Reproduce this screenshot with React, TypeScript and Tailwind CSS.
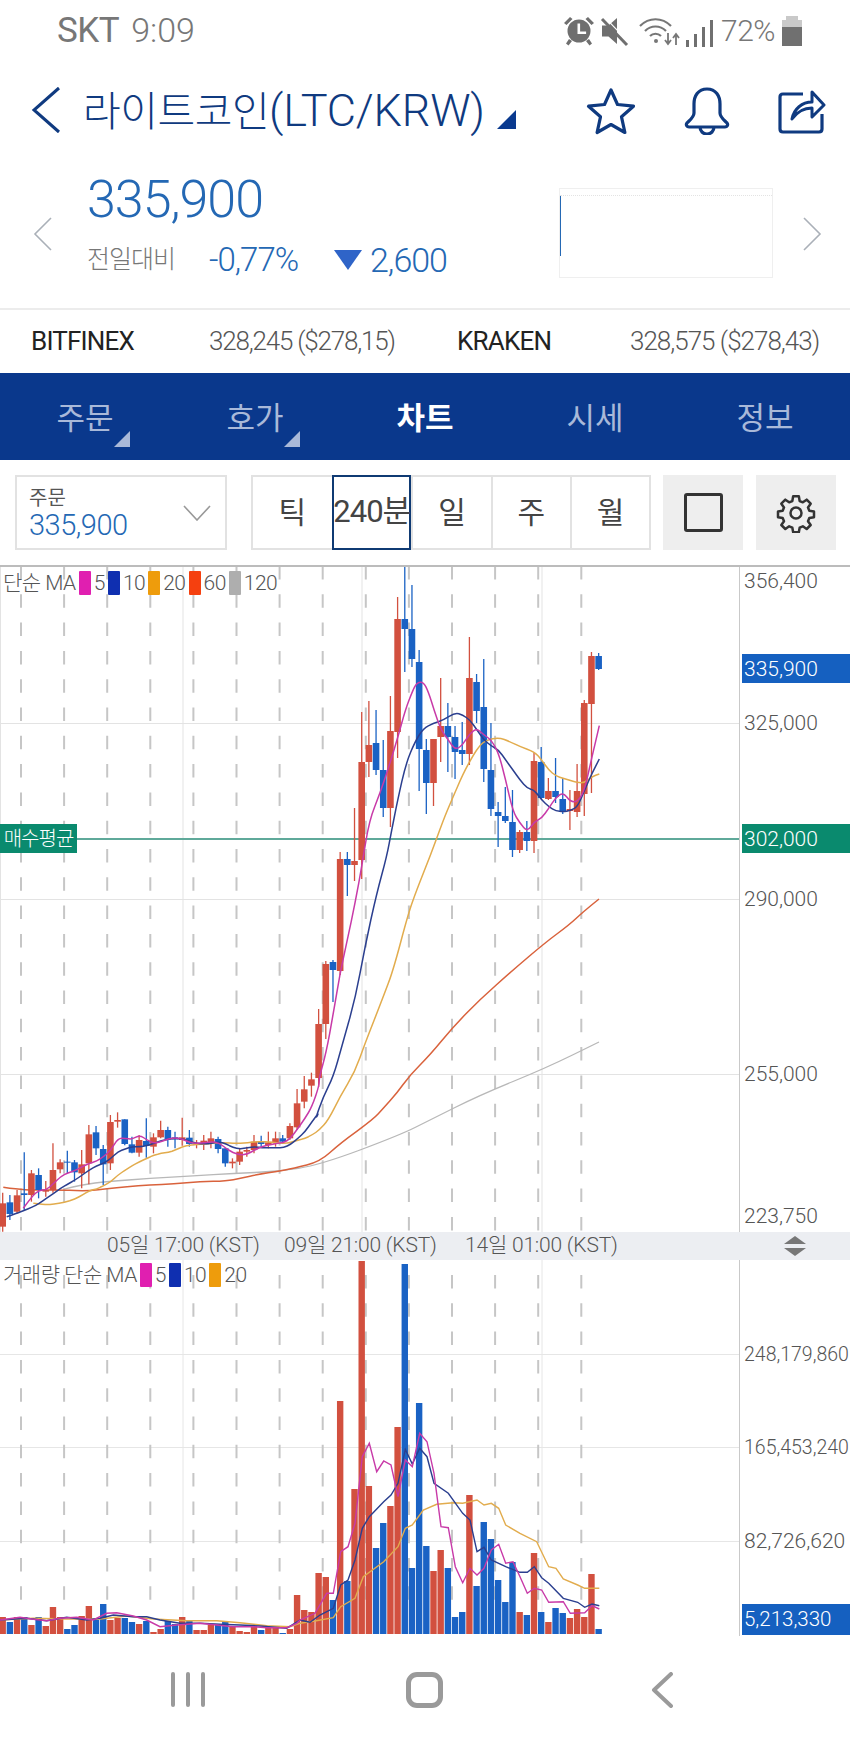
/**
 * Coin detail screen: price header, tabs, candle chart and volume chart
 */

import React from 'react';

const RED = '#d2503f';
const BLUE = '#1a62c4';
const NAVY = '#0f3a80';

const slotX = (i: number) => 2.7 + 7.18 * i;

// read off the 3x crops, so each list carries the origin of its crop
const at = (ox: number, oy: number, pts: number[][]) => pts.map(([x, y]) => [ox + x / 3, oy + y / 3]);
const toPath = (pts: number[][]) => pts.map(([x, y], i) => `${i ? 'L' : 'M'}${x.toFixed(1)} ${y.toFixed(1)}`).join('');

// rounds the corners through the midpoints, for the moving averages of the price panel
const toSmooth = (pts: number[][]) => {
  let d = `M${pts[0][0].toFixed(1)} ${pts[0][1].toFixed(1)}`;
  for (let i = 1; i < pts.length - 1; i++) {
    const mx = (pts[i][0] + pts[i + 1][0]) / 2;
    const my = (pts[i][1] + pts[i + 1][1]) / 2;
    d += `Q${pts[i][0].toFixed(1)} ${pts[i][1].toFixed(1)} ${mx.toFixed(1)} ${my.toFixed(1)}`;
  }
  const last = pts[pts.length - 1];
  return `${d}L${last[0].toFixed(1)} ${last[1].toFixed(1)}`;
};

// wick top, body top, body bottom, wick bottom, 1 = rising (red)
type Candle = [number, number, number, number, number];

const leftCandles: Candle[] = [
  [578, 610, 680, 695, 1], [585, 607, 642, 660, 0], [570, 586, 635, 640, 1], [457, 580, 585, 630, 0],
  [510, 520, 585, 605, 1], [505, 525, 570, 595, 0], [543, 570, 575, 590, 1], [430, 510, 570, 578, 1],
  [478, 487, 508, 520, 1], [452, 485, 488, 520, 0], [480, 487, 517, 545, 0], [450, 493, 520, 565, 1],
  [375, 403, 490, 553, 1], [378, 397, 445, 465, 0], [435, 447, 493, 555, 0], [345, 366, 490, 510, 1],
  [337, 360, 365, 383, 1], [358, 358, 432, 436, 0], [410, 433, 458, 460, 0], [405, 420, 458, 470, 1],
  [355, 423, 438, 473, 0], [400, 412, 440, 460, 1], [362, 390, 412, 415, 1], [380, 390, 418, 440, 0],
  [395, 412, 418, 445, 0], [353, 412, 420, 437, 1], [390, 413, 432, 440, 0], [420, 430, 433, 445, 1],
  [405, 422, 433, 450, 1], [395, 415, 428, 445, 1], [410, 417, 447, 460, 0], [445, 445, 490, 500, 0],
  [475, 485, 490, 505, 1], [445, 455, 485, 495, 1], [440, 450, 455, 470, 1], [405, 425, 450, 460, 1],
  [407, 425, 432, 440, 0], [395, 427, 435, 445, 1], [395, 415, 430, 440, 1], [405, 415, 425, 432, 0],
  [370, 378, 415, 420, 1], [267, 310, 382, 390, 1], [228, 268, 305, 325, 1], [218, 238, 257, 290, 1],
];

const rightCandles: Candle[] = [
  [1009, 1024, 1078, 1087, 1], [961, 964, 1024, 1039, 1], [960, 962, 970, 1002, 0], [852, 859, 971, 975, 1],
  [852, 859, 865, 896, 0], [808, 861, 865, 881, 1], [712, 762, 860, 879, 1], [701, 745, 762, 777, 1],
  [710, 743, 770, 775, 0], [740, 770, 808, 817, 0], [696, 731, 808, 827, 1], [597, 619, 732, 758, 1],
  [566, 619, 629, 672, 0], [585, 629, 659, 667, 0], [650, 662, 749, 791, 0], [739, 750, 783, 814, 0],
  [739, 739, 783, 806, 1], [678, 726, 737, 762, 1], [703, 726, 737, 772, 0], [726, 737, 752, 779, 0],
  [722, 750, 754, 765, 0], [637, 678, 754, 765, 1], [674, 682, 711, 723, 0], [659, 707, 769, 782, 0],
  [723, 770, 809, 816, 0], [802, 812, 816, 847, 0], [787, 816, 821, 823, 0], [790, 822, 850, 857, 0],
  [830, 832, 850, 853, 1], [821, 832, 841, 851, 0], [753, 761, 841, 853, 1], [747, 762, 798, 799, 0],
  [778, 791, 799, 800, 1], [758, 791, 797, 803, 0], [778, 799, 812, 814, 0], [790, 809, 811, 830, 1],
  [764, 791, 812, 817, 1], [700, 703, 794, 816, 1], [652, 656, 704, 793, 1], [653, 656, 669, 670, 0],
];

const candles: Candle[] = [
  ...leftCandles.map(
    (c) => [1000 + c[0] / 3, 1000 + c[1] / 3, 1000 + c[2] / 3, 1000 + c[3] / 3, c[4]] as Candle,
  ),
  ...rightCandles,
];

const ma5 = [
  ...at(0, 1000, [[70, 625], [95, 590], [118, 570], [139, 570], [161, 550], [182, 530], [204, 518], [225, 512], [247, 500], [268, 490], [290, 483], [311, 470], [333, 450], [354, 415], [376, 415], [397, 418], [419, 405], [441, 420], [462, 430], [484, 425], [505, 417], [527, 413], [549, 418], [570, 428], [592, 430], [613, 428], [635, 425], [656, 428], [678, 445], [699, 458], [721, 465], [743, 462], [764, 450], [786, 440], [807, 435], [829, 430], [851, 428], [872, 415], [894, 385], [915, 355], [936, 320], [958, 255]]),
  ...at(240, 800, [[237, 835], [258, 760], [280, 640], [300, 520], [322, 420], [345, 310], [367, 190], [388, 60]]),
  ...at(300, 560, [[240, 700], [273, 600], [294, 530], [316, 450], [337, 395], [350, 368], [370, 365], [385, 395], [402, 450], [423, 510], [445, 540], [466, 570], [488, 555], [510, 520], [531, 505], [552, 525], [574, 540], [596, 580], [617, 660], [639, 755], [660, 790], [682, 815], [703, 785], [725, 775], [746, 745], [768, 712], [790, 697], [811, 725], [833, 725], [854, 690], [876, 590], [898, 497]]),
];

const ma10 = [
  ...at(0, 1000, [[20, 650], [50, 640], [74, 630], [96, 622], [118, 610], [139, 595], [161, 580], [182, 565], [204, 552], [225, 540], [247, 525], [268, 510], [290, 497], [311, 490], [333, 475], [354, 455], [376, 447], [397, 440], [419, 440], [441, 437], [462, 430], [484, 422], [505, 418], [527, 415], [549, 417], [570, 425], [592, 430], [613, 432], [635, 430], [656, 425], [678, 432], [699, 442], [721, 447], [743, 443], [764, 440], [786, 443], [807, 443], [829, 443], [851, 443], [872, 433], [894, 415], [915, 395], [936, 365], [958, 335]]),
  ...at(240, 800, [[225, 960], [250, 890], [280, 830], [305, 740], [345, 600], [375, 440], [410, 280], [440, 170], [455, 90], [473, 0]]),
  ...at(300, 560, [[318, 610], [345, 545], [370, 505], [400, 490], [430, 480], [465, 458], [488, 465], [510, 480], [531, 510], [552, 540], [574, 558], [596, 570], [617, 600], [639, 630], [660, 660], [682, 685], [703, 690], [725, 720], [746, 740], [768, 753], [790, 755], [811, 752], [833, 740], [854, 690], [876, 640], [898, 597]]),
];

const ma20 = [
  ...at(0, 1000, [[100, 610], [139, 615], [161, 612], [193, 607], [225, 597], [247, 585], [268, 572], [290, 567], [311, 557], [333, 545], [354, 525], [376, 510], [397, 497], [419, 485], [441, 475], [462, 465], [484, 460], [505, 457], [527, 450], [549, 440], [570, 435], [592, 433], [613, 432], [635, 430], [656, 428], [678, 428], [699, 430], [721, 430], [743, 428], [764, 425], [786, 425], [807, 425], [829, 428], [851, 430], [872, 428], [894, 420], [915, 415], [936, 405], [958, 390]]),
  ...at(240, 800, [[265, 960], [300, 890], [345, 815], [375, 730], [430, 590], [460, 510], [505, 340], [530, 270], [570, 170], [610, 60], [635, 0]]),
  ...at(300, 560, [[490, 640], [520, 585], [540, 555], [560, 540], [596, 532], [630, 545], [660, 560], [703, 575], [725, 600], [746, 630], [768, 648], [790, 655], [833, 668], [854, 668], [876, 650], [898, 642]]),
];

const ma60 = [
  ...at(0, 1000, [[10, 562], [50, 568], [100, 570], [193, 570], [225, 572], [270, 572], [320, 567], [380, 560], [450, 555], [520, 552], [600, 545], [680, 543], [720, 535], [780, 522], [830, 515], [880, 505], [960, 485]]),
  ...at(240, 800, [[300, 1030], [400, 958], [430, 925], [470, 880], [510, 825], [570, 765], [640, 680], [720, 598]]),
  [513, 970], [546, 942], [569, 925], [583, 912], [599, 899],
];

const ma120 = [
  ...at(0, 1000, [[190, 568], [250, 553], [320, 545], [450, 535], [580, 528], [700, 520], [830, 515], [960, 495]]),
  ...at(240, 800, [[480, 1005], [570, 960], [720, 885]]),
  [546, 1068], [599, 1042],
];

// bar tops, slot by slot
const volumes: [number, number][] = [
  [1617, 1], [1622, 0], [1617, 1], [1617, 0], [1625, 1], [1617, 0], [1626, 1], [1607, 1], [1617, 1], [1629, 0],
  [1625, 0], [1616, 1], [1606, 1], [1620, 0], [1604, 0], [1620, 1], [1618, 1], [1618, 0], [1622, 0], [1624, 1],
  [1621, 0], [1632, 1], [1629, 1], [1621, 0], [1624, 0], [1617, 1], [1621, 0], [1630, 1], [1630, 1], [1625, 1],
  [1625, 0], [1622, 0], [1627, 1], [1631, 1], [1632, 1], [1626, 1], [1630, 0], [1627, 1], [1627, 1], [1633, 0],
  [1629, 1], [1595, 1], [1610, 1], [1612, 1], [1573, 1], [1577, 1], [1600, 0], [1401, 1], [1581, 0], [1489, 1],
  [1261, 1], [1486, 1], [1548, 0], [1523, 0], [1506, 1], [1427, 1], [1264, 0], [1568, 0], [1403, 0], [1546, 0],
  [1571, 1], [1550, 1], [1568, 0], [1617, 0], [1612, 0], [1495, 1], [1586, 0], [1522, 0], [1539, 0], [1580, 0],
  [1602, 0], [1562, 0], [1612, 1], [1615, 0], [1553, 1], [1612, 0], [1622, 1], [1608, 0], [1613, 0], [1618, 1],
  [1609, 1], [1617, 1], [1574, 1], [1629, 0],
];

const volMa5 = [
  ...at(0, 1230, [[0, 1170], [60, 1162], [100, 1168], [140, 1172], [180, 1165], [230, 1162], [280, 1170], [320, 1150], [350, 1148], [400, 1158], [440, 1170], [480, 1190], [530, 1185], [600, 1180], [650, 1185], [700, 1190], [760, 1190], [800, 1193], [860, 1193], [890, 1180]]),
  ...at(300, 1260, [[0, 1080], [45, 1060], [80, 1000], [100, 1000], [122, 875], [144, 860], [165, 790], [187, 590], [208, 550], [230, 635], [251, 603], [273, 615], [294, 710], [316, 600], [337, 620], [359, 520], [381, 545], [402, 640], [423, 800], [445, 803], [466, 920], [488, 968], [510, 925], [531, 945], [552, 925], [574, 870], [596, 853], [617, 910], [639, 905], [660, 950], [682, 1000], [703, 985], [725, 990], [746, 1027], [790, 1025], [811, 1060], [854, 1058], [876, 1037], [898, 1047]]),
];

const volMa10 = [
  ...at(0, 1230, [[0, 1170], [80, 1165], [140, 1172], [200, 1162], [260, 1170], [300, 1165], [340, 1155], [400, 1160], [440, 1160], [480, 1170], [540, 1180], [600, 1180], [660, 1183], [720, 1185], [780, 1188], [860, 1195]]),
  ...at(300, 1260, [[0, 1080], [30, 1087], [60, 1065], [100, 1045], [122, 975], [144, 960], [165, 900], [187, 805], [208, 770], [251, 725], [273, 705], [294, 670], [316, 568], [337, 612], [359, 565], [381, 590], [402, 670], [445, 700], [488, 760], [510, 780], [531, 875], [552, 862], [574, 900], [617, 920], [660, 937], [682, 937], [703, 920], [725, 953], [746, 970], [790, 1015], [833, 1027], [854, 1042], [876, 1032], [898, 1037]]),
];

const volMa20 = [
  ...at(0, 1230, [[0, 1170], [100, 1165], [200, 1167], [300, 1167], [380, 1158], [460, 1167], [560, 1172], [650, 1172], [720, 1178], [800, 1187], [870, 1190]]),
  ...at(300, 1260, [[0, 1090], [45, 1083], [100, 1073], [122, 1040], [165, 1015], [190, 950], [251, 905], [294, 860], [316, 805], [337, 795], [370, 750], [410, 733], [460, 728], [488, 730], [531, 720], [552, 735], [574, 730], [596, 745], [617, 795], [660, 820], [710, 845], [746, 920], [768, 925], [790, 957], [833, 975], [854, 985], [898, 985]]),
];

const dashXs = Array.from({ length: 14 }, (_, i) => 21 + 43.1 * i);

// Status bar icons
const StatusIcons: React.FC = () => (
  <div className="flex items-center shrink-0">
    <svg width="155" height="34" viewBox="0 0 155 34" className="shrink-0">
      <g fill="#6f6f6f">
        <circle cx="17" cy="17" r="11.5" />
        <path d="M2 9l6-6 2.5 2-6 6zM32 9l-6-6-2.5 2 6 6zM7 25l3 2-3.5 4.5-2.5-2zM27 25l-3 2 3.5 4.5 2.5-2z" />
        <path d="M15.5 9.5h2.6v8h6v2.6h-8.6z" fill="#fff" />
        <path d="M55 4v26l-8.5-7.5H40v-11h6.5z" />
      </g>
      <path d="M40 5l25 26" stroke="#6f6f6f" strokeWidth="3" />
      <path d="M40 5l25 26" stroke="#fff" strokeWidth="1.2" transform="translate(2.4 -2.2)" />
      <g fill="none" stroke="#777" strokeWidth="2.2">
        <path d="M78 12c9-9 22-9 31 0M83 17c6-6 15-6 21 0M88 22c3-3 8-3 11 0" />
      </g>
      <circle cx="94" cy="27" r="2" fill="#777" />
      <path d="M106 19v10M103 26l3 4 3-4M114 31V21M111 24l3-4 3 4" fill="none" stroke="#777" strokeWidth="1.8" />
      <g fill="#707070">
        <rect x="124" y="26" width="3" height="7" />
        <rect x="132" y="20" width="3" height="13" />
        <rect x="140" y="13" width="3" height="20" />
        <rect x="148" y="6" width="3" height="27" />
      </g>
    </svg>
    <span className="ml-[4px] w-[61px] text-[30px] leading-none text-[#777] tracking-[-0.5px]">72%</span>
    <svg width="20" height="30" viewBox="0 0 20 30" className="shrink-0">
      <path d="M4 4V0h12v4h4v26H0V4z" fill="#c9c9c9" />
      <path d="M0 11h20v19H0z" fill="#707070" />
    </svg>
  </div>
);

// Candle chart panel
const PriceChart: React.FC = () => (
  <svg width="850" height="665" viewBox="0 567 850 665" className="block">
    {[723, 899, 1074].map((y) => (
      <line key={y} x1="0" x2="739" y1={y + 0.5} y2={y + 0.5} stroke="#e3e3e3" />
    ))}
    {[0.5, 183, 362, 542].map((x) => (
      <line key={x} x1={x} x2={x} y1="567" y2="1232" stroke="#e3e3e3" />
    ))}
    <line x1="739.5" x2="739.5" y1="567" y2="1232" stroke="#c9c9c9" />
    {dashXs.map((x) => (
      <line key={x} x1={x} x2={x} y1="566" y2="1232" stroke="#c6c6c6" strokeWidth="2" strokeDasharray="13.5 14.8" />
    ))}
    <line x1="0" x2="739" y1="839" y2="839" stroke="#5fa99a" strokeWidth="2" />
    <path d={toSmooth(ma120)} fill="none" stroke="#b8b8b8" strokeWidth="1.3" />
    <path d={toSmooth(ma60)} fill="none" stroke="#d9623c" strokeWidth="1.5" />
    {candles.map((c, i) => {
      const x = slotX(i);
      const color = c[4] ? RED : BLUE;
      return (
        <g key={i}>
          <line x1={x} x2={x} y1={c[0]} y2={c[3]} stroke={color} strokeWidth="1.3" />
          <rect x={x - 3.3} y={c[1]} width="6.6" height={c[2] - c[1]} fill={color} />
        </g>
      );
    })}
    <path d={toSmooth(ma20)} fill="none" stroke="#e2ac4d" strokeWidth="1.5" />
    <path d={toSmooth(ma10)} fill="none" stroke="#2b3f8f" strokeWidth="1.5" />
    <path d={toSmooth(ma5)} fill="none" stroke="#c83aa8" strokeWidth="1.5" />

    <g fontSize="21" fill="#555" fontWeight="300">
      <text x="744" y="588">356,400</text>
      <text x="744" y="730">325,000</text>
      <text x="744" y="906">290,000</text>
      <text x="744" y="1081">255,000</text>
      <text x="744" y="1223">223,750</text>
    </g>
    <rect x="742" y="654" width="108" height="29" fill="#1560c0" />
    <text x="744" y="676" fontSize="21" fill="#fff" fontWeight="300">335,900</text>
    <rect x="742" y="824" width="108" height="29" fill="#0a8a6e" />
    <text x="744" y="846" fontSize="21" fill="#fff" fontWeight="300">302,000</text>
  </svg>
);

// Volume chart panel
const VolumeChart: React.FC = () => (
  <svg width="850" height="376" viewBox="0 1260 850 376" className="block">
    {[1354, 1447, 1541].map((y) => (
      <line key={y} x1="0" x2="739" y1={y + 0.5} y2={y + 0.5} stroke="#e6e6e6" />
    ))}
    {[183, 542].map((x) => (
      <line key={x} x1={x} x2={x} y1="1260" y2="1634" stroke="#e6e6e6" />
    ))}
    <line x1="739.5" x2="739.5" y1="1260" y2="1636" stroke="#c9c9c9" />
    {dashXs.map((x) => (
      <line key={x} x1={x} x2={x} y1="1275" y2="1601" stroke="#c6c6c6" strokeWidth="2" strokeDasharray="13.5 14.8" />
    ))}
    {volumes.map(([top, up], i) => (
      <rect key={i} x={slotX(i) - 3.2} y={top} width="6.4" height={1634 - top} fill={up ? RED : BLUE} />
    ))}
    <path d={toPath(volMa20)} fill="none" stroke="#e2ac4d" strokeWidth="1.4" />
    <path d={toPath(volMa10)} fill="none" stroke="#2b3f8f" strokeWidth="1.4" />
    <path d={toPath(volMa5)} fill="none" stroke="#c83aa8" strokeWidth="1.4" />

    <g fill="#555" fontWeight="300">
      <text x="744" y="1361" fontSize="19.500">248,179,860</text>
      <text x="744" y="1454" fontSize="19.500">165,453,240</text>
      <text x="744" y="1548" fontSize="21">82,726,620</text>
    </g>
    <rect x="742" y="1604" width="108" height="31" fill="#1560c0" />
    <text x="744" y="1626" fontSize="20.500" fill="#fff" fontWeight="300">5,213,330</text>
  </svg>
);

const Swatch: React.FC<{ className: string }> = ({ className }) => (
  <span className={`w-[12px] h-[24px] rounded-[1px] mx-[3px] ${className}`}></span>
);

export default function App() {
  const tabs = [
    { label: '주문', mark: true },
    { label: '호가', mark: true },
    { label: '차트', active: true },
    { label: '시세' },
    { label: '정보' },
  ];
  const periods = ['틱', '240분', '일', '주', '월'];

  return (
    <div className="w-[850px] h-[1748px] bg-white overflow-hidden flex flex-col font-['Roboto','Noto_Sans_CJK_KR',sans-serif] font-light">
      {/* status bar */}
      <div className="h-[60px] flex items-center justify-between pl-[57px] pr-[48px] pt-[1px] text-[#777]">
        <div className="flex items-baseline gap-[12px]">
          <span className="text-[35px] leading-none font-normal tracking-[-0.5px]">SKT</span>
          <span className="text-[34px] leading-none">9:09</span>
        </div>
        <StatusIcons />
      </div>

      {/* title row */}
      <div className="h-[90px] flex items-center pl-[31px] pr-[24px] pt-[10px]" style={{ color: NAVY }}>
        <svg width="30" height="48" viewBox="0 0 30 48" className="shrink-0">
          <path d="M28 2L3 24l25 22" fill="none" stroke={NAVY} strokeWidth="3" />
        </svg>
        <span className="ml-[22px] text-[41px] leading-none tracking-[-0.5px] whitespace-nowrap">
          라이트코인<span className="text-[45px] tracking-[-0.2px]">(LTC/KRW)</span>
        </span>
        <svg width="20" height="20" viewBox="0 0 20 20" className="ml-[12px] mt-[20px] shrink-0">
          <path d="M19 0v19H0z" fill="#0a3a8f" />
        </svg>
        <div className="ml-auto mt-[1px] flex items-center gap-[48px]">
          <svg width="50" height="48" viewBox="0 0 50 48">
            <path d="M25 3l6.5 14.5 16 1.700-12 10.600 3.400 15.700L25 37.500 11.100 45.500l3.400-15.700-12-10.600 16-1.700z" fill="none" stroke={NAVY} strokeWidth="3.200" strokeLinejoin="round" />
          </svg>
          <svg width="46" height="48" viewBox="0 0 46 48">
            <path d="M23 2c-9 0-13 7-13 15v9c0 4-4 7-7 10-1.500 2 0 4 2 4h36c2 0 3.500-2 2-4-3-3-7-6-7-10v-9c0-8-4-15-13-15zM16 40c0 4 3 7 7 7s7-3 7-7" fill="none" stroke={NAVY} strokeWidth="3.200" strokeLinejoin="round" />
          </svg>
          <svg width="48" height="46" viewBox="0 0 48 46">
            <path d="M25 6H5c-2 0-3 1-3 3v32c0 2 1 3 3 3h36c2 0 3-1 3-3V26" fill="none" stroke={NAVY} strokeWidth="3.200" strokeLinejoin="round" />
            <path d="M14 31c2-10 10-17 20-17V4l12 13-12 12V20c-8 0-15 4-20 11z" fill="none" stroke={NAVY} strokeWidth="3" strokeLinejoin="round" />
          </svg>
        </div>
      </div>

      {/* price block */}
      <div className="h-[160px] border-b-2 border-[#ececec] flex items-start">
        <svg width="20" height="34" viewBox="0 0 20 34" className="ml-[33px] mt-[67px] shrink-0">
          <path d="M18 1L2 17l16 16" fill="none" stroke="#aab0b8" strokeWidth="1.600" />
        </svg>
        <div className="ml-[34px] w-[472px] pt-[20px]">
          <div className="text-[52px] leading-[60px] text-[#2468b4] tracking-[-1px]">335,900</div>
          <div className="mt-[14px] flex items-center h-[32px]">
            <span className="w-[122px] text-[25px] text-[#777] tracking-[-1px]">전일대비</span>
            <span className="w-[125px] text-[33px] text-[#2468b4] tracking-[-1px]">-0,77%</span>
            <svg width="28" height="20" viewBox="0 0 28 20" className="shrink-0">
              <path d="M0 0h28L14 20z" fill="#2f64c8" />
            </svg>
            <span className="ml-[8px] text-[34px] text-[#2468b4] tracking-[-1px]">2,600</span>
          </div>
        </div>
        <div className="w-[214px] h-[90px] mt-[38px] border border-[#efefef] flex flex-col shrink-0">
          <div className="mt-[6px] border-t border-dotted border-[#e3e3e3]"></div>
          <div className="w-[1px] h-[60px] bg-[#2468b4]"></div>
        </div>
        <svg width="20" height="34" viewBox="0 0 20 34" className="ml-[29px] mt-[67px] shrink-0">
          <path d="M2 1l16 16L2 33" fill="none" stroke="#aab0b8" strokeWidth="1.600" />
        </svg>
      </div>

      {/* exchange prices */}
      <div className="h-[63px] flex items-center text-[26px] tracking-[-0.8px] whitespace-nowrap">
        <span className="ml-[31px] w-[178px] text-[#222] font-normal">BITFINEX</span>
        <span className="w-[248px] text-[#555] tracking-[-1.2px]">328,245 ($278,15)</span>
        <span className="w-[173px] text-[#222] font-normal">KRAKEN</span>
        <span className="text-[#555] tracking-[-1px]">328,575 ($278,43)</span>
      </div>

      {/* tabs */}
      <div className="h-[87px] bg-[#0a388c] grid grid-cols-5">
        {tabs.map((t) => (
          <div key={t.label} className="relative flex items-center justify-center pt-[5px]">
            <span className={`text-[31px] ${t.active ? 'text-white font-bold' : 'text-[#a9b9d9] font-normal'}`}>{t.label}</span>
            {t.mark && (
              <svg width="16" height="16" viewBox="0 0 16 16" className="absolute left-[114px] top-[58px]">
                <path d="M16 0v16H0z" fill="#a9b9d9" />
              </svg>
            )}
          </div>
        ))}
      </div>

      {/* chart controls */}
      <div className="h-[105px] flex items-center pl-[15px] pr-[14px]">
        <div className="w-[212px] h-[75px] border-2 border-[#e2e2e2] flex items-center justify-between pl-[12px] pr-[14px]">
          <div className="flex flex-col">
            <span className="text-[20px] leading-[24px] text-[#555] font-normal">주문</span>
            <span className="text-[29px] leading-[30px] text-[#2468b4] tracking-[-0.5px]">335,900</span>
          </div>
          <svg width="28" height="16" viewBox="0 0 28 16" className="shrink-0">
            <path d="M1 1l13 14L27 1" fill="none" stroke="#999" strokeWidth="1.600" />
          </svg>
        </div>
        <div className="ml-[24px] w-[401px] h-[75px] border-2 border-[#e2e2e2] grid grid-cols-5">
          {periods.map((p, i) => (
            <div
              key={p}
              className={`flex items-center justify-center whitespace-nowrap text-[#444] font-normal ${
                i === 1
                  ? '-my-[2px] border-2 border-[#0f3a73] text-[#0f4a90] font-light text-[31px] tracking-[-1px]'
                  : 'text-[30px]'
              } ${i > 1 ? 'border-l-2 border-[#e2e2e2]' : ''}`}
            >
              {p}
            </div>
          ))}
        </div>
        <div className="ml-[12px] w-[80px] h-[75px] bg-[#eeeeee] flex items-center justify-center">
          <div className="w-[39px] h-[39px] border-[3px] border-[#333] rounded-[3px]"></div>
        </div>
        <div className="ml-[13px] w-[80px] h-[75px] bg-[#eeeeee] flex items-center justify-center">
          <svg width="40" height="40" viewBox="0 0 24 24" fill="none" stroke="#333" strokeWidth="1.500" strokeLinejoin="round">
            <circle cx="12" cy="12" r="3.300" />
            <path d="M10.300 2h3.400l.5 2.800 1.900.8 2.300-1.600 2.400 2.400-1.600 2.300.8 1.900 2.800.5v3.400l-2.800.5-.8 1.900 1.600 2.300-2.400 2.400-2.300-1.600-1.900.8-.5 2.800h-3.400l-.5-2.800-1.900-.8-2.300 1.600-2.400-2.400 1.600-2.300-.8-1.900-2.800-.5v-3.400l2.800-.5.8-1.900-1.600-2.300 2.400-2.400 2.300 1.600 1.900-.8z" />
          </svg>
        </div>
      </div>

      {/* candle chart */}
      <div className="relative border-t-2 border-[#bcbcbc]">
        <PriceChart />
        <div className="absolute left-[3px] top-[4px] flex items-center text-[21px] leading-[24px] text-[#555] tracking-[-0.5px]">
          <span>단순 MA</span>
          <Swatch className="bg-[#e01fb0]" />
          <span>5</span>
          <Swatch className="bg-[#0f2fb0]" />
          <span>10</span>
          <Swatch className="bg-[#ee9c0c]" />
          <span>20</span>
          <Swatch className="bg-[#f5400f]" />
          <span>60</span>
          <Swatch className="bg-[#aeaeae]" />
          <span>120</span>
        </div>
        {/* buy average tag on the green line */}
        <div className="absolute left-0 top-[257px] w-[77px] h-[29px] bg-[#0a8a6e] flex items-center justify-center text-[20px] text-white tracking-[-1px] whitespace-nowrap">
          매수평균
        </div>
      </div>

      {/* time axis */}
      <div className="h-[28px] bg-[#eceef2] flex items-center text-[21px] text-[#555] tracking-[-0.2px] whitespace-nowrap relative">
        <span className="ml-[107px] w-[177px]">05일 17:00 (KST)</span>
        <span className="w-[181px]">09일 21:00 (KST)</span>
        <span>14일 01:00 (KST)</span>
        <svg width="24" height="20" viewBox="0 0 24 20" className="ml-auto mr-[43px] shrink-0">
          <path d="M12 0l11 8H1zM12 20L1 12h22z" fill="#777" />
        </svg>
      </div>

      {/* volume chart */}
      <div className="relative">
        <VolumeChart />
        <div className="absolute left-[3px] top-[3px] flex items-center text-[21px] leading-[24px] text-[#555] tracking-[-0.5px]">
          <span>거래량 단순 MA</span>
          <Swatch className="bg-[#e01fb0]" />
          <span>5</span>
          <Swatch className="bg-[#0f2fb0]" />
          <span>10</span>
          <Swatch className="bg-[#ee9c0c]" />
          <span>20</span>
        </div>
      </div>

      {/* navigation bar */}
      <div className="flex-1 grid grid-cols-3 px-[70px] items-start pt-[36px]">
        <div className="flex justify-center gap-[11px]">
          <div className="w-[4px] h-[35px] rounded-full bg-[#9a9a9a]"></div>
          <div className="w-[4px] h-[35px] rounded-full bg-[#9a9a9a]"></div>
          <div className="w-[4px] h-[35px] rounded-full bg-[#9a9a9a]"></div>
        </div>
        <div className="flex justify-center">
          <div className="w-[37px] h-[36px] border-[5px] border-[#9a9a9a] rounded-[11px]"></div>
        </div>
        <div className="flex justify-center">
          <svg width="22" height="36" viewBox="0 0 22 36">
            <path d="M20 2L3 18l17 16" fill="none" stroke="#9a9a9a" strokeWidth="4" strokeLinecap="round" strokeLinejoin="round" />
          </svg>
        </div>
      </div>
    </div>
  );
}
